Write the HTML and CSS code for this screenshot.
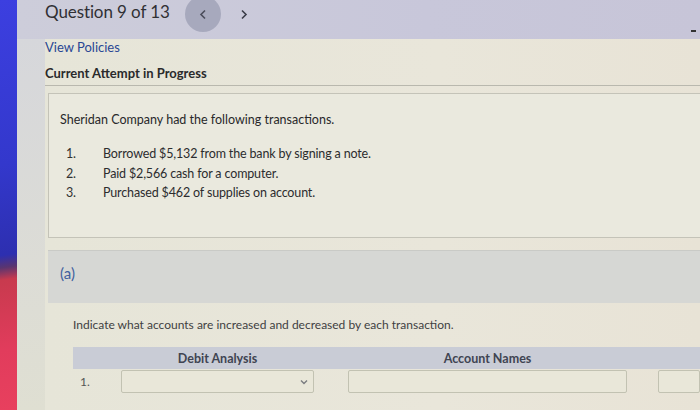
FILE: index.html
```html
<!DOCTYPE html>
<html>
<head>
<meta charset="utf-8">
<link rel="stylesheet" href="styles.css">
</head>
<body>
<div class="strip"></div>
<div class="main">
  <header class="topbar">
    <span class="qtitle">Question 9 of 13</span>
    <span class="navbtn navbtn-active">
      <svg width="8" height="11" viewBox="0 0 8 11"><path d="M6 1.5 L2 5.5 L6 9.5" fill="none" stroke="#4a4c5a" stroke-width="1.6"/></svg>
    </span>
    <span class="navbtn">
      <svg width="8" height="11" viewBox="0 0 8 11"><path d="M2 1.5 L6 5.5 L2 9.5" fill="none" stroke="#3a3c48" stroke-width="1.6"/></svg>
    </span>
    <span class="dash"></span>
  </header>
  <div class="bodyrow">
    <div class="gutter"></div>
    <div class="content">
      <a class="policies">View Policies</a>
      <div class="attempt">Current Attempt in Progress</div>
      <div class="rule"></div>
      <section class="panel">
        <p class="intro">Sheridan Company had the following transactions.</p>
        <ol class="tlist">
          <li><span class="num">1.</span><span>Borrowed $5,132 from the bank by signing a note.</span></li>
          <li><span class="num">2.</span><span>Paid $2,566 cash for a computer.</span></li>
          <li><span class="num">3.</span><span>Purchased $462 of supplies on account.</span></li>
        </ol>
      </section>
      <div class="partband"><span class="part">(a)</span></div>
      <div class="partbody">
        <p class="instr">Indicate what accounts are increased and decreased by each transaction.</p>
        <div class="grid">
          <div class="hdr hdr-fill"></div>
          <div class="hdr">Debit Analysis</div>
          <div class="hdr hdr-fill"></div>
          <div class="hdr">Account Names</div>
          <div class="hdr hdr-fill"></div>
          <div class="hdr hdr-fill"></div>
          <div class="rowlabel">1.</div>
          <div class="select">
            <svg width="8" height="6" viewBox="0 0 8 6"><path d="M1 1.5 L4 4.5 L7 1.5" fill="none" stroke="#7a7c80" stroke-width="1.4"/></svg>
          </div>
          <div></div>
          <div class="input"></div>
          <div></div>
          <div class="input"></div>
        </div>
      </div>
    </div>
  </div>
</div>
</body>
</html>
```
FILE: styles.css
```css
html, body {
  margin: 0;
  padding: 0;
  height: 410px;
  overflow: hidden;
}
body {
  display: flex;
  font-family: Lato, "Open Sans", sans-serif;
  color: #2c2c2e;
  background: #e7e5d7;
}
.strip {
  width: 17px;
  flex: none;
  background: linear-gradient(172deg, #3c3fe0 0%, #3338cc 40%, #2d2fb0 62%, #5a3570 65%, #c83a4e 68%, #e13c5c 85%, #e8405e 100%);
}
.main {
  flex: 1;
  display: flex;
  flex-direction: column;
  min-width: 0;
}
.topbar {
  height: 39px;
  flex: none;
  background: linear-gradient(to right, #cdcdda, #c8c7da 60%, #c7c5d8);
  display: flex;
  align-items: flex-start;
  padding-left: 28px;
  position: relative;
}
.qtitle {
  font-size: 17px;
  line-height: 24px;
  color: #303034;
  letter-spacing: -0.1px;
}
.navbtn {
  width: 36px;
  height: 36px;
  border-radius: 50%;
  display: flex;
  align-items: center;
  justify-content: center;
  margin-top: -4px;
}
.navbtn-active {
  background: #a7a9bd;
  margin-left: 15px;
}
.navbtn + .navbtn {
  margin-left: 5px;
}
.dash {
  position: absolute;
  right: 4px;
  top: 30px;
  width: 5px;
  height: 2px;
  background: #333;
}
.bodyrow {
  flex: 1;
  display: flex;
}
.gutter {
  width: 28px;
  flex: none;
  background: linear-gradient(to bottom, #d6d7db, #dcdcd6 60%, #dfdfd2);
}
.content {
  flex: 1;
  display: flex;
  flex-direction: column;
  min-width: 0;
  background: linear-gradient(to right, #e6e5d8, #e9e6da 60%, #e8e3d6);
}
.policies {
  font-size: 13px;
  line-height: 16px;
  color: #294794;
}
.attempt {
  font-size: 13px;
  font-weight: bold;
  line-height: 16px;
  margin-top: 10px;
  color: #2a2a2c;
}
.rule {
  height: 1px;
  background: #b9b8ae;
  margin-top: 4px;
}
.panel {
  margin: 7px 0 0 3px;
  height: 143px;
  border: 1px solid #c4c3b8;
  border-right: none;
  background: #eae9de;
  padding: 0 0 0 11px;
}
.intro {
  margin: 18px 0 0;
  font-size: 12.5px;
  line-height: 16px;
  color: #28282a;
}
.tlist {
  list-style: none;
  margin: 16px 0 0;
  padding: 0;
  font-size: 12.5px;
  line-height: 19.5px;
  letter-spacing: -0.15px;
}
.tlist li {
  display: flex;
}
.num {
  width: 37px;
  padding-left: 6px;
  color: #333;
}
.partband {
  margin: 12px 0 0 3px;
  height: 53px;
  box-sizing: border-box;
  background: #d6d7d4;
  border-top: 1px solid #c9cac6;
  display: flex;
  align-items: flex-start;
  padding: 12px 0 0 12px;
}
.part {
  font-size: 15px;
  line-height: 20px;
  color: #40609e;
}
.partbody {
  margin-left: 3px;
  padding-left: 25px;
}
.instr {
  margin: 15px 0 0;
  font-size: 12px;
  line-height: 14px;
  color: #3f3f42;
}
.grid {
  margin-top: 15px;
  display: grid;
  grid-template-columns: 48px 193px 34px 279px 31px 1fr;
  grid-template-rows: 22px 23px;
  row-gap: 1px;
}
.hdr {
  background: #c9ccd6;
  font-size: 12.5px;
  font-weight: bold;
  color: #404452;
  display: flex;
  align-items: center;
  justify-content: center;
}
.rowlabel {
  font-size: 12px;
  color: #555;
  padding-left: 7px;
  display: flex;
  align-items: center;
}
.select, .input {
  border: 1px solid #c2c2b2;
  border-radius: 2px;
  background: #e9e7d9;
  box-sizing: border-box;
}
.select {
  display: flex;
  align-items: center;
  justify-content: flex-end;
  padding-right: 5px;
}
```
